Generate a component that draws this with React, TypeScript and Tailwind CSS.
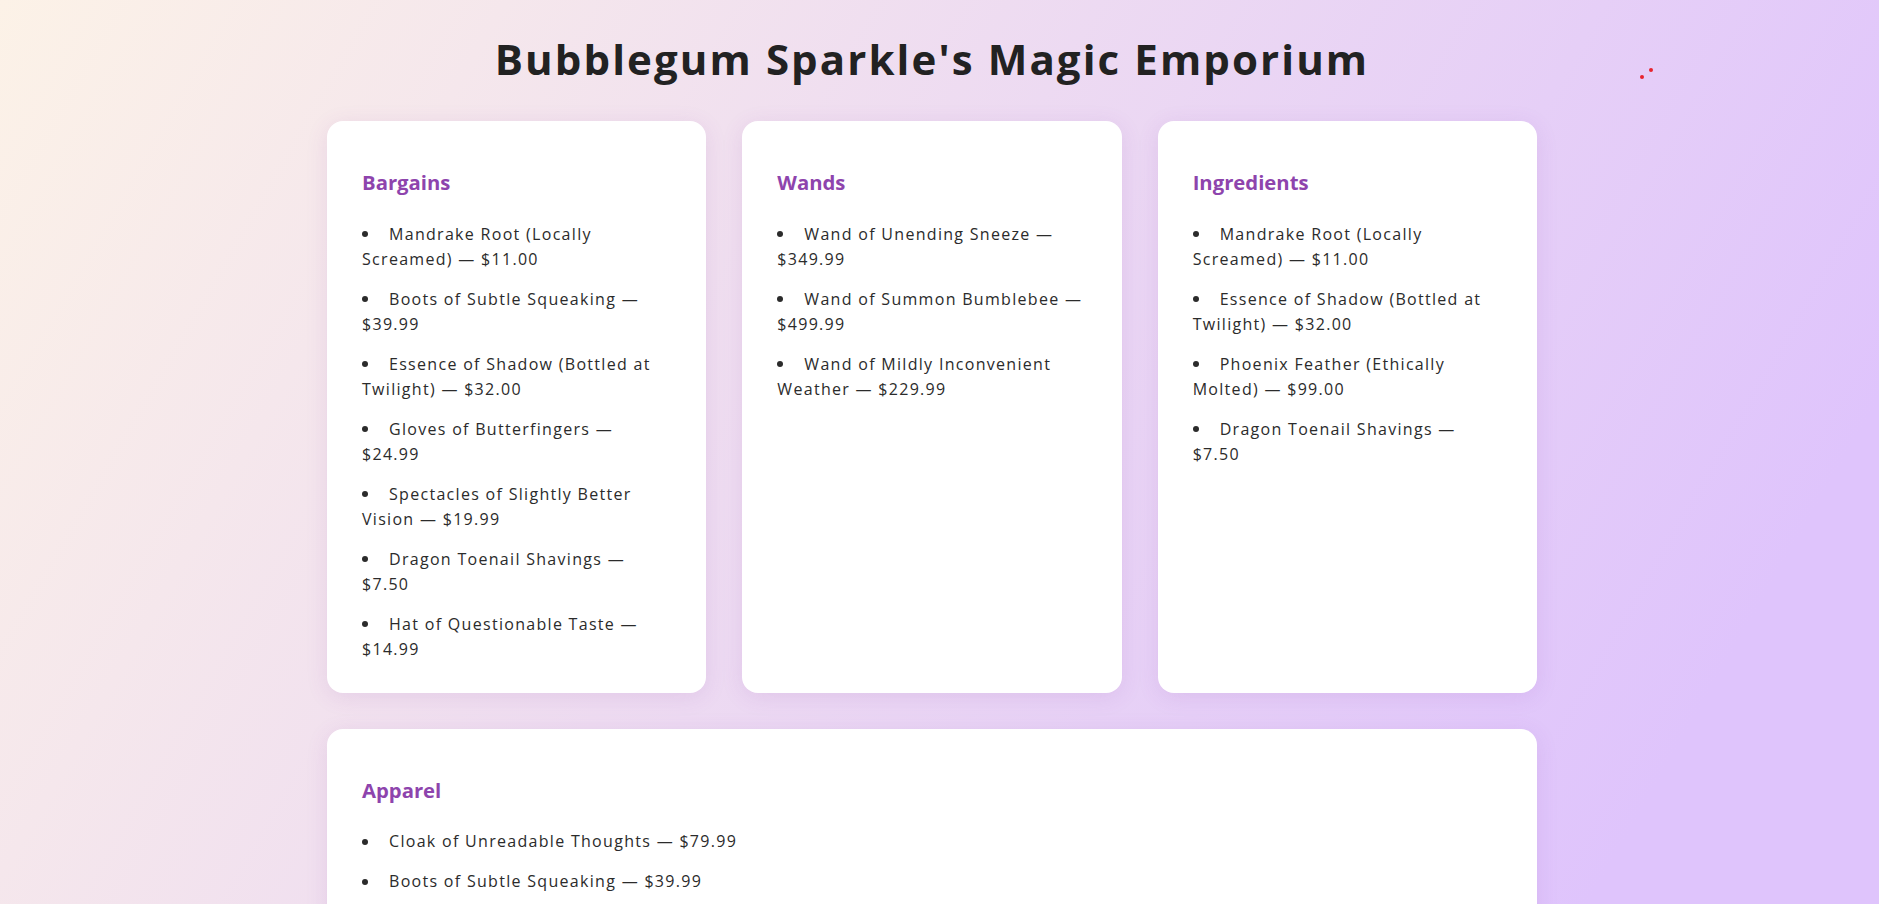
import React from 'react'

type Section = {
  title: string
  items: string[]
}

const sections: Section[] = [
  {
    title: 'Bargains',
    items: [
      'Mandrake Root (Locally Screamed) — $11.00',
      'Boots of Subtle Squeaking — $39.99',
      'Essence of Shadow (Bottled at Twilight) — $32.00',
      'Gloves of Butterfingers — $24.99',
      'Spectacles of Slightly Better Vision — $19.99',
      'Dragon Toenail Shavings — $7.50',
      'Hat of Questionable Taste — $14.99',
    ],
  },
  {
    title: 'Wands',
    items: [
      'Wand of Unending Sneeze — $349.99',
      'Wand of Summon Bumblebee — $499.99',
      'Wand of Mildly Inconvenient Weather — $229.99',
    ],
  },
  {
    title: 'Ingredients',
    items: [
      'Mandrake Root (Locally Screamed) — $11.00',
      'Essence of Shadow (Bottled at Twilight) — $32.00',
      'Phoenix Feather (Ethically Molted) — $99.00',
      'Dragon Toenail Shavings — $7.50',
    ],
  },
]

const apparel: Section = {
  title: 'Apparel',
  items: [
    'Cloak of Unreadable Thoughts — $79.99',
    'Boots of Subtle Squeaking — $39.99',
    'Gloves of Butterfingers — $24.99',
    'Hat of Questionable Taste — $14.99',
  ],
}

const Card: React.FC<{ section: Section }> = ({ section }) => {
  return (
    <div className="rounded-2xl bg-white px-[35px] pt-[49px] pb-[31px] shadow-[0_4px_22px_rgba(142,68,173,0.12)]">
      <h2 className="text-[20.3px] leading-[1.2] font-bold text-[#8e44ad]">
        {section.title}
      </h2>
      <ul className="mt-[27px] flex flex-col gap-[15px]">
        {section.items.map((item, i) => (
          <li key={i} className="text-base leading-[25px] tracking-[1.3px] text-[#2b2b2b]">
            <span className="relative -top-[1px] mr-[21px] inline-block h-[6px] w-[6px] rounded-full bg-[#2b2b2b] align-middle" />
            {item}
          </li>
        ))}
      </ul>
    </div>
  )
}

export default function App() {
  return (
    <div
      className="relative min-h-screen bg-[linear-gradient(120deg,#fcf2e7_0%,#dfc4fc_85%)] pr-[15px] pb-10"
      style={{ fontFamily: '"Open Sans", "Noto Sans", sans-serif' }}
    >
      {/* little sparkle bits */}
      <span className="absolute top-[68px] left-[1649px] h-[4px] w-[4px] rounded-full bg-[#e8232e]" />
      <span className="absolute top-[75px] left-[1640px] h-[4px] w-[4px] rounded-full bg-[#e8232e]" />

      <h1 className="pt-[34px] text-center text-[42px] leading-[1.2] font-bold tracking-[2.1px] text-[#222]">
        Bubblegum Sparkle's Magic Emporium
      </h1>

      <div className="mx-auto mt-[37px] flex w-[1210px] flex-col gap-[36px]">
        <div className="grid grid-cols-3 gap-[36px]">
          {sections.map((s) => (
            <Card key={s.title} section={s} />
          ))}
        </div>
        <Card section={apparel} />
      </div>
    </div>
  )
}
